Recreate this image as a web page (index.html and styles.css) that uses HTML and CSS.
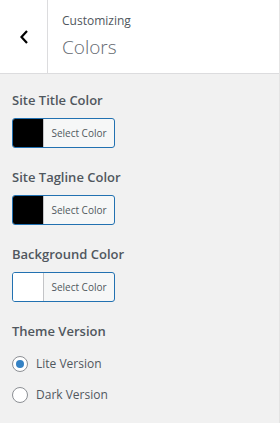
FILE: index.html
```html
<!DOCTYPE html>
<html lang="en">
<head>
    <meta charset="UTF-8">
    <meta name="viewport" content="width=device-width, initial-scale=1.0">
    <title>Customizing Colors</title>
    <link rel="stylesheet" href="styles.css">
</head>
<body>
    <div class="panel">
        <!-- Section header -->
        <div class="section-header">
            <button class="back-button" aria-label="Back">
                <svg width="10" height="16" viewBox="0 0 10 16"><path d="M8 2 L2.5 8 L8 14" fill="none" stroke="#000" stroke-width="2.2"/></svg>
            </button>
            <div class="section-title">
                <span class="section-sub">Customizing</span>
                <h3>Colors</h3>
            </div>
        </div>

        <div class="controls">
            <div class="control">
                <span class="control-title">Site Title Color</span>
                <button class="color-button">
                    <span class="swatch swatch-dark"></span>
                    <span class="color-text">Select Color</span>
                </button>
            </div>

            <div class="control">
                <span class="control-title">Site Tagline Color</span>
                <button class="color-button">
                    <span class="swatch swatch-dark"></span>
                    <span class="color-text">Select Color</span>
                </button>
            </div>

            <div class="control">
                <span class="control-title">Background Color</span>
                <button class="color-button">
                    <span class="swatch swatch-light"></span>
                    <span class="color-text">Select Color</span>
                </button>
            </div>

            <div class="control control-radio">
                <span class="control-title">Theme Version</span>
                <label class="radio-row"><span class="radio checked"></span>Lite Version</label>
                <label class="radio-row"><span class="radio"></span>Dark Version</label>
            </div>
        </div>
    </div>
</body>
</html>
```

FILE: styles.css
```css
body {
    margin: 0;
    font-family: "Open Sans", sans-serif;
    background-color: #f1f1f1;
    color: #50575e;
}

.panel {
    height: 423px;
    border-right: 1px solid #e4e4e4;
    box-sizing: border-box;
}

.section-header {
    display: flex;
    height: 73px;
    background: #fff;
    border-bottom: 1px solid #dcdcde;
}

.back-button {
    width: 48px;
    padding: 0;
    border: none;
    border-right: 1px solid #dcdcde;
    background: transparent;
    display: flex;
    align-items: center;
    justify-content: center;
    cursor: pointer;
}

.section-title {
    padding: 10px 0 0 14px;
    display: flex;
    flex-direction: column;
}

.section-sub {
    font-size: 12px;
    line-height: 22px;
    color: #50575e;
}

.section-title h3 {
    margin: 0;
    font-size: 19px;
    font-weight: 300;
    line-height: 30px;
    color: #646970;
}

.controls {
    padding: 14px 12px 0;
}

.control {
    display: flex;
    flex-direction: column;
    align-items: flex-start;
    margin-bottom: 17px;
}

.control-radio {
    margin-top: 6px;
}

.control-title {
    font-size: 13px;
    font-weight: 600;
    line-height: 24px;
    margin-bottom: 6px;
    color: #50575e;
}

.control-radio .control-title {
    margin-bottom: 6px;
}

.color-button {
    display: flex;
    width: 103px;
    height: 30px;
    padding: 0;
    border: 1px solid #2271b1;
    border-radius: 3px;
    background: #f6f7f7;
    overflow: hidden;
    cursor: pointer;
}

.swatch {
    width: 30px;
    height: 100%;
    border-right: 1px solid #c3c4c7;
}

.swatch-dark {
    background: #000;
}

.swatch-light {
    background: #fff;
}

.color-text {
    flex: 1;
    font-family: "Open Sans", sans-serif;
    font-size: 10px;
    line-height: 28px;
    color: #50575e;
    text-align: center;
}

.radio-row {
    display: flex;
    align-items: center;
    gap: 8px;
    font-size: 12px;
    line-height: 16px;
    color: #50575e;
    margin-top: 7px;
    margin-bottom: 8px;
}

.radio {
    width: 16px;
    height: 16px;
    border: 1px solid #8c8f94;
    border-radius: 50%;
    background: #fff;
    box-sizing: border-box;
    display: flex;
    align-items: center;
    justify-content: center;
}

.radio.checked::before {
    content: "";
    width: 8px;
    height: 8px;
    border-radius: 50%;
    background: #3582c4;
}
```
